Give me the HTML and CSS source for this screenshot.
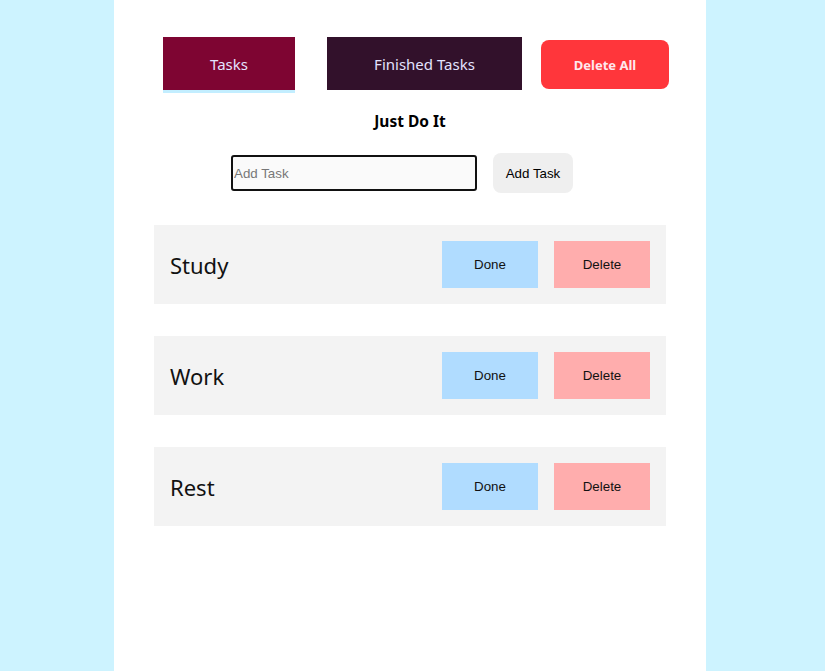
FILE: index.html
```html
<!DOCTYPE html>
<html>
<head>
<meta charset="utf-8">
<link rel="stylesheet" href="styles.css">
</head>
<body>
<div class="app">
  <div class="tabs">
    <button class="tab tab-active">Tasks</button>
    <button class="tab tab-finished">Finished Tasks</button>
    <button class="delete-all">Delete All</button>
  </div>
  <h1 class="title">Just Do It</h1>
  <div class="add-row">
    <input class="add-input" type="text" placeholder="Add Task">
    <button class="add-btn">Add Task</button>
  </div>
  <div class="list">
    <div class="task">
      <span class="task-name">Study</span>
      <div class="actions">
        <button class="btn-done">Done</button>
        <button class="btn-delete">Delete</button>
      </div>
    </div>
    <div class="task">
      <span class="task-name">Work</span>
      <div class="actions">
        <button class="btn-done">Done</button>
        <button class="btn-delete">Delete</button>
      </div>
    </div>
    <div class="task">
      <span class="task-name">Rest</span>
      <div class="actions">
        <button class="btn-done">Done</button>
        <button class="btn-delete">Delete</button>
      </div>
    </div>
  </div>
</div>
</body>
</html>
```
FILE: styles.css
```css
html, body {
  margin: 0;
  padding: 0;
  height: 100%;
}
body {
  background: #cdf3ff;
  font-family: "Liberation Sans", Arial, sans-serif;
}
.app {
  width: 592px;
  margin-left: 114px;
  min-height: 671px;
  background: #ffffff;
  box-sizing: border-box;
  padding-top: 37px;
}
.tabs {
  display: flex;
  align-items: flex-start;
  padding-left: 49px;
}
.tab {
  border: none;
  height: 53px;
  color: #e3e3ff;
  font-family: "Noto Sans", "Open Sans", sans-serif;
  font-size: 15px;
  cursor: pointer;
  padding: 0;
}
.tab-active {
  width: 132px;
  background: #7e0532;
  border-bottom: 3px solid #c3eeff;
  height: 56px;
}
.tab-finished {
  width: 195px;
  margin-left: 32px;
  background: #32112b;
}
.delete-all {
  width: 128px;
  height: 49px;
  margin-left: 19px;
  margin-top: 3px;
  border: none;
  border-radius: 8px;
  background: #ff363b;
  color: #ffe8ee;
  font-family: "Noto Sans", "Open Sans", sans-serif;
  font-weight: 700;
  font-size: 13px;
}
.title {
  margin: 17px 0 0 0;
  text-align: center;
  font-family: "Noto Sans", "Open Sans", sans-serif;
  font-weight: 700;
  font-size: 15.5px;
  line-height: 22px;
  color: #000;
}
.add-row {
  display: flex;
  align-items: center;
  gap: 16px;
  margin-top: 21px;
  padding-left: 117px;
}
.add-input {
  width: 246px;
  height: 36px;
  box-sizing: border-box;
  border: 2px solid #111;
  border-radius: 3px;
  background: #fafafa;
  padding: 0 1px;
  font-family: "Liberation Sans", Arial, sans-serif;
  font-size: 13.33px;
}
.add-input::placeholder {
  color: #777;
}
.add-btn {
  width: 80px;
  height: 40px;
  border: none;
  border-radius: 8px;
  background: #efefef;
  color: #000;
  font-family: "Liberation Sans", Arial, sans-serif;
  font-size: 13.33px;
}
.list {
  margin-top: 32px;
  padding-left: 40px;
  display: flex;
  flex-direction: column;
  gap: 32px;
}
.task {
  width: 512px;
  height: 79px;
  box-sizing: border-box;
  background: #f3f3f3;
  display: flex;
  align-items: center;
  justify-content: space-between;
  padding: 0 16px;
}
.task-name {
  font-family: "Noto Sans", "Open Sans", sans-serif;
  font-size: 22px;
  color: #111;
}
.actions {
  display: flex;
  gap: 16px;
}
.btn-done, .btn-delete {
  width: 96px;
  height: 47px;
  border: none;
  font-family: "Liberation Sans", Arial, sans-serif;
  font-size: 13.33px;
  color: #111;
}
.btn-done {
  background: #b0dcff;
}
.btn-delete {
  background: #ffadad;
}
```
